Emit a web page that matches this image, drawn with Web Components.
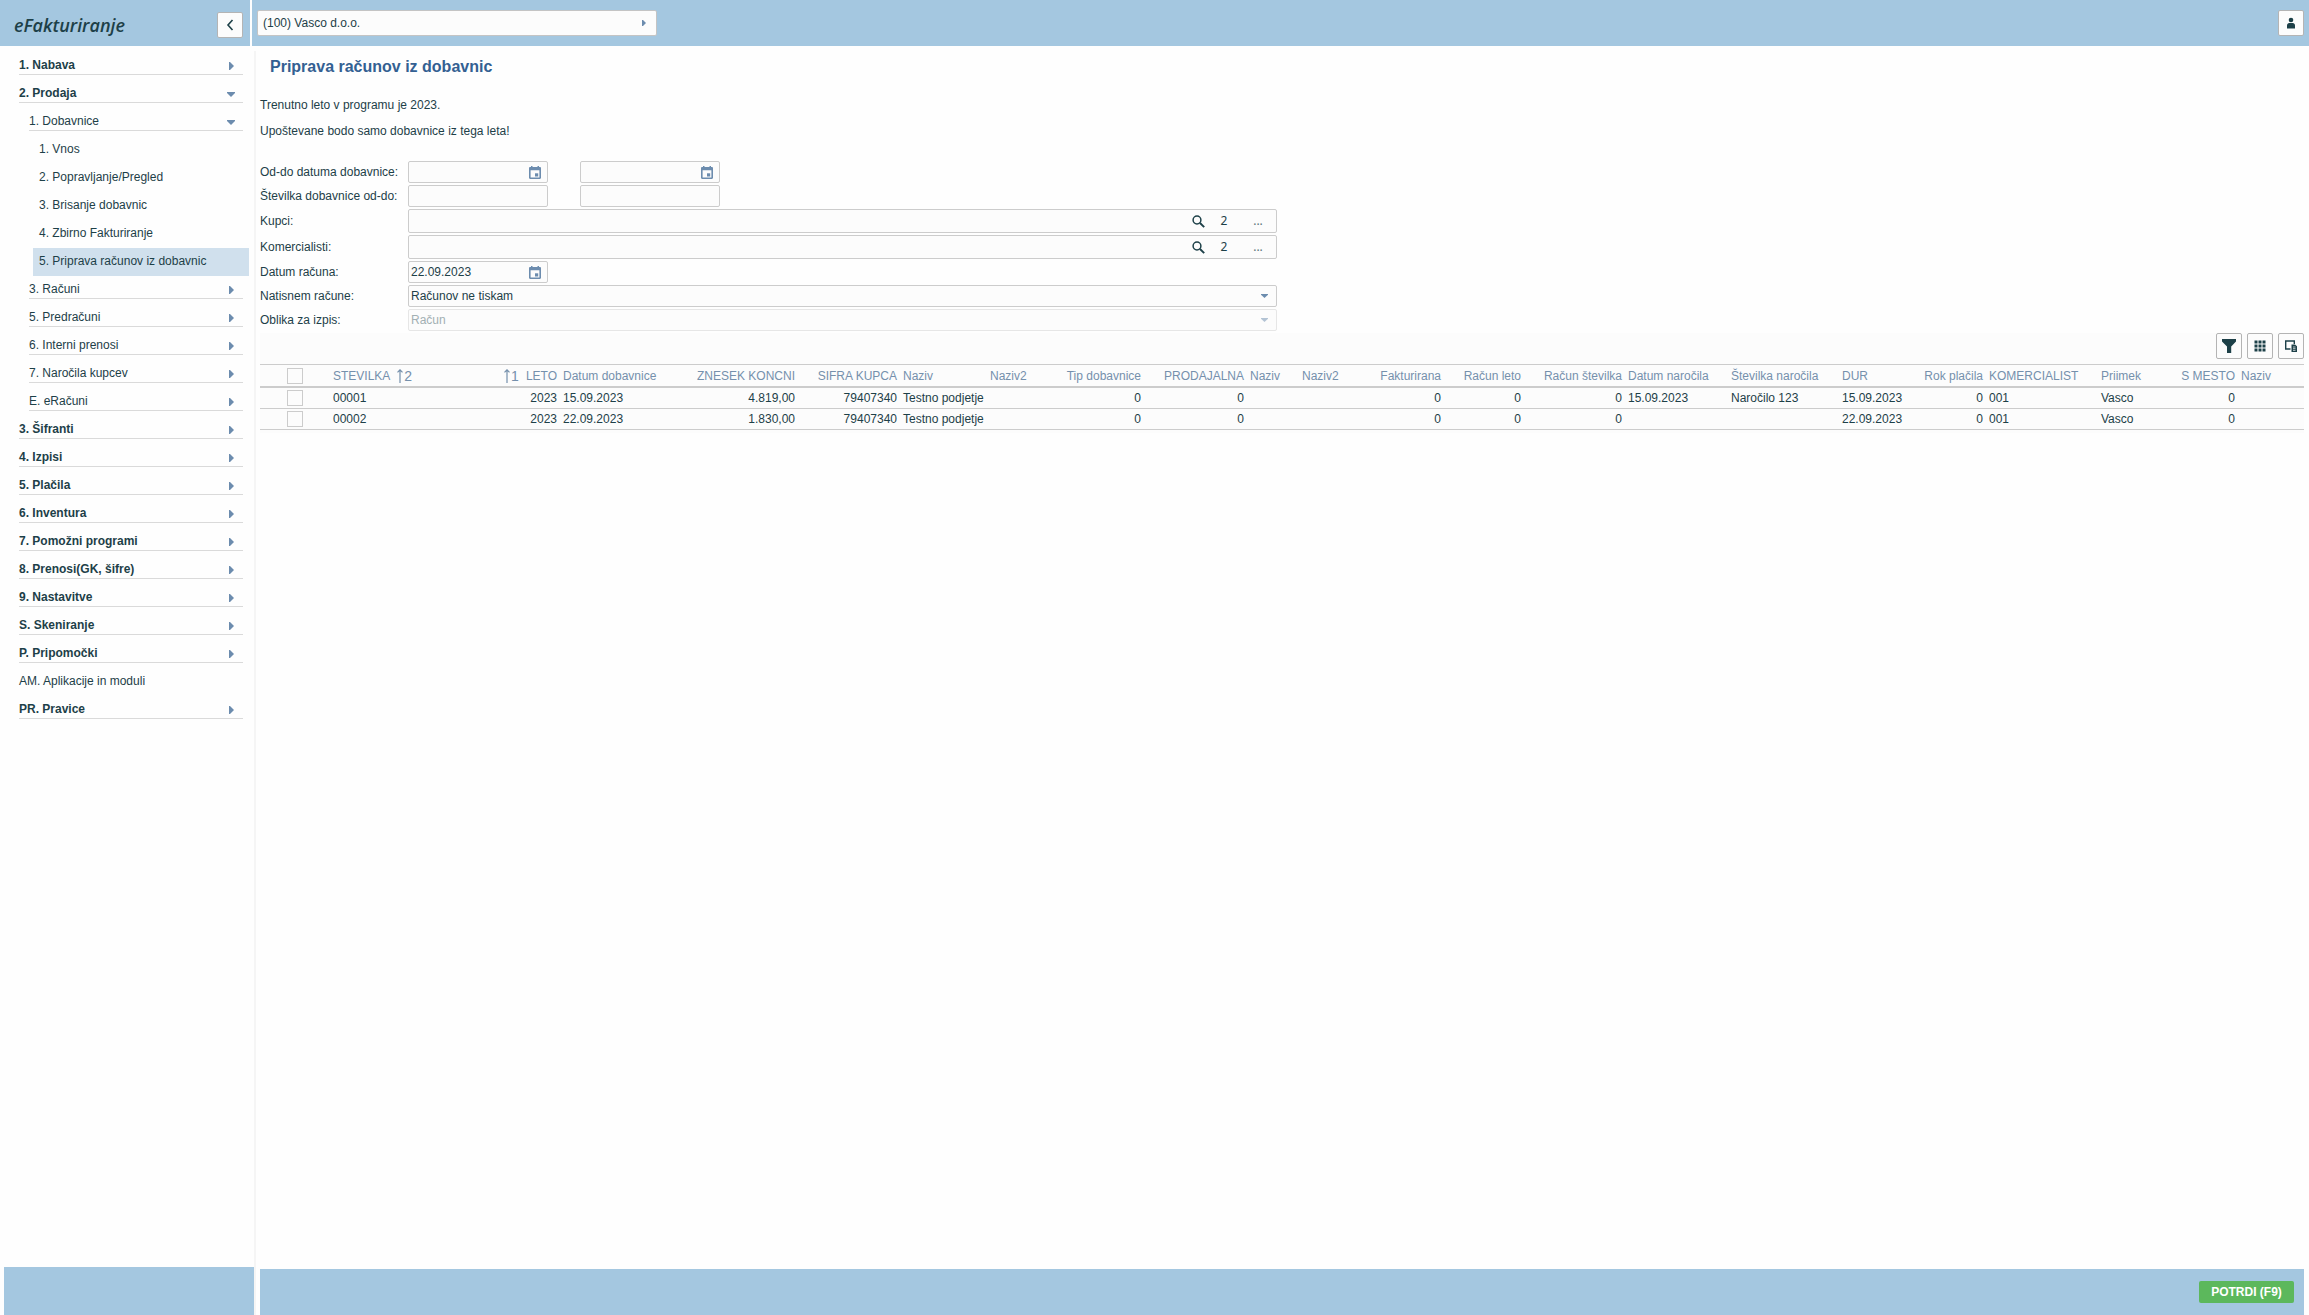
<!DOCTYPE html>
<html lang="sl">
<head>
<meta charset="utf-8">
<title>eFakturiranje</title>
<style>
  html, body { margin: 0; height: 100%; }
  body {
    --bar: #a4c7e0;
    --ink: #1d4048;
    --accent: #6c8cae;
    --line: #cccccc;
    --field: #fcfcfc;
    font: 12px/18px "Liberation Sans", Arial, sans-serif;
    color: var(--ink);
    background: #fefefe;
  }
</style>
</head>
<body>
<app-shell>
  <app-brand slot="brand">eFakturiranje</app-brand>
  <company-picker slot="top">(100) Vasco d.o.o.</company-picker>
  <icon-button slot="top" label="Uporabnik" icon="user"></icon-button>

  <nav-item slot="nav" level="1" arrow="right">1. Nabava</nav-item>
  <nav-item slot="nav" level="1" arrow="down">2. Prodaja</nav-item>
  <nav-item slot="nav" level="2" arrow="down">1. Dobavnice</nav-item>
  <nav-item slot="nav" level="3">1. Vnos</nav-item>
  <nav-item slot="nav" level="3">2. Popravljanje/Pregled</nav-item>
  <nav-item slot="nav" level="3">3. Brisanje dobavnic</nav-item>
  <nav-item slot="nav" level="3">4. Zbirno Fakturiranje</nav-item>
  <nav-item slot="nav" level="3" active>5. Priprava računov iz dobavnic</nav-item>
  <nav-item slot="nav" level="2" arrow="right">3. Računi</nav-item>
  <nav-item slot="nav" level="2" arrow="right">5. Predračuni</nav-item>
  <nav-item slot="nav" level="2" arrow="right">6. Interni prenosi</nav-item>
  <nav-item slot="nav" level="2" arrow="right">7. Naročila kupcev</nav-item>
  <nav-item slot="nav" level="2" arrow="right">E. eRačuni</nav-item>
  <nav-item slot="nav" level="1" arrow="right">3. Šifranti</nav-item>
  <nav-item slot="nav" level="1" arrow="right">4. Izpisi</nav-item>
  <nav-item slot="nav" level="1" arrow="right">5. Plačila</nav-item>
  <nav-item slot="nav" level="1" arrow="right">6. Inventura</nav-item>
  <nav-item slot="nav" level="1" arrow="right">7. Pomožni programi</nav-item>
  <nav-item slot="nav" level="1" arrow="right">8. Prenosi(GK, šifre)</nav-item>
  <nav-item slot="nav" level="1" arrow="right">9. Nastavitve</nav-item>
  <nav-item slot="nav" level="1" arrow="right">S. Skeniranje</nav-item>
  <nav-item slot="nav" level="1" arrow="right">P. Pripomočki</nav-item>
  <nav-item slot="nav" level="1">AM. Aplikacije in moduli</nav-item>
  <nav-item slot="nav" level="1" arrow="right">PR. Pravice</nav-item>

  <page-intro heading="Priprava računov iz dobavnic">
    <p>Trenutno leto v programu je 2023.</p>
    <p>Upoštevane bodo samo dobavnice iz tega leta!</p>
  </page-intro>
  <invoice-form>
    <form-row kind="date" pair label="Od-do datuma dobavnice:"></form-row>
    <form-row kind="text" pair label="Številka dobavnice od-do:"></form-row>
    <form-row kind="lookup" label="Kupci:"></form-row>
    <form-row kind="lookup" label="Komercialisti:"></form-row>
    <form-row kind="date" label="Datum računa:" value="22.09.2023"></form-row>
    <form-row kind="select" label="Natisnem račune:" value="Računov ne tiskam"></form-row>
    <form-row kind="select" label="Oblika za izpis:" value="Račun" disabled></form-row>
  </invoice-form>
  <data-grid>
    <icon-button slot="tools" label="Filter" icon="filter"></icon-button>
    <icon-button slot="tools" label="Stolpci" icon="grid"></icon-button>
    <icon-button slot="tools" label="Izvoz" icon="export"></icon-button>
  </data-grid>
  <confirm-button slot="actions">POTRDI (F9)</confirm-button>
</app-shell>

<script>
const ICONS = {
  back: '<svg width="12" height="14" viewBox="0 0 12 14"><path d="M8.5 2 4 7l4.500 5" fill="none" stroke="currentColor" stroke-width="1.6"/></svg>',
  user: '<svg width="10" height="12" viewBox="0 0 10 12" fill="currentColor"><circle cx="5" cy="3" r="2.3"/><path d="M1 11.500V8.400C1 7 2 6 3.300 6h3.400C8 6 9 7 9 8.400v3.100z"/></svg>',
  filter: '<svg width="16" height="16" viewBox="0 0 16 16" fill="currentColor"><path d="M1 1h14v2.6L10.2 8.6V15H6V8.6L1 3.6z"/></svg>',
  grid: '<svg width="12" height="12" viewBox="0 0 12 12" fill="currentColor"><path d="M.5.5h3v3h-3zM4.5.5h3v3h-3zM8.5.5h3v3h-3zM.5 4.5h3v3h-3zM4.5 4.5h3v3h-3zM8.5 4.5h3v3h-3zM.5 8.5h3v3h-3zM4.500 8.500h3v3h-3zM8.500 8.500h3v3h-3z"/></svg>',
  export: '<svg width="14" height="14" viewBox="0 0 14 14"><path d="M6.500 10H1.700V2h8.600v3" fill="none" stroke="currentColor" stroke-width="1.400"/><path d="M7.500 5.500H11l2 1.700V13H7.500z" fill="currentColor"/><path d="M9 8h2.500M9 9.700h2.500M9 11.400h2.500" stroke="#fcfcfc" stroke-width=".7"/></svg>',
  calendar: '<svg width="12" height="13" viewBox="0 0 12 13" fill="currentColor"><path fill-rule="evenodd" d="M2 0h1.500v1h5V0H10v1h.8c.7 0 1.200.5 1.200 1.200v9.600c0 .7-.5 1.200-1.200 1.200H1.200C.5 13 0 12.500 0 11.800V2.200C0 1.500.5 1 1.200 1H2zM1.600 4.300v7.100h8.800V4.300z"/><path d="M6 7.300h3.200v3.200H6z"/></svg>',
  search: '<svg width="13" height="13" viewBox="0 0 13 13" fill="none" stroke="currentColor"><circle cx="5" cy="5" r="3.900" stroke-width="1.500"/><path d="m8 8 4.200 4.200" stroke-width="1.900"/></svg>',
  right: '<svg width="5" height="8" viewBox="0 0 5 8" fill="currentColor"><path d="M0 0h1l4 4-4 4H0z"/></svg>',
  small: '<svg width="4" height="6" viewBox="0 0 4 6" fill="currentColor"><path d="M0 0h1l3 3-3 3H0z"/></svg>',
  down: '<svg width="8" height="5" viewBox="0 0 8 5" fill="currentColor"><path d="M0 0h8v1L4 5 0 1z"/></svg>',
  drop: '<svg width="7" height="4" viewBox="0 0 7 4" fill="currentColor"><path d="M0 0h7v.7L3.500 4 0 .7z"/></svg>',
  sort: '<svg width="6" height="14" viewBox="0 0 6 14"><path d="M3 14V1M.5 3.300 3 .8l2.500 2.500" fill="none" stroke="currentColor" stroke-width="1.200"/></svg>'
};
const RESET = '*{box-sizing:border-box} button,input,select{font:inherit;color:inherit;margin:0;padding:0;border:0;background:none;outline:0} svg{display:block;flex:none}';

function define(name, css, html) {
  customElements.define(name, class extends HTMLElement {
    constructor() { super(); this.attachShadow({ mode: 'open' }); }
    connectedCallback() {
      this.shadowRoot.innerHTML = `<style>${RESET}${css}</style>` + (typeof html === 'function' ? html(this) : html);
    }
  });
}

define('app-shell', `
  :host{display:grid;grid-template-columns:250px minmax(0,1fr);grid-template-rows:46px minmax(0,1fr);column-gap:2px;row-gap:5px;height:100vh}
  .brand{background:var(--bar);display:flex}
  .top{background:var(--bar);display:flex;align-items:flex-start;justify-content:space-between;padding:10px 5px}
  .body{grid-column:1/3;display:grid;grid-template-columns:256px minmax(0,1fr);min-height:0}
  aside{display:flex;flex-direction:column;border-right:2px solid #f5f5f5;padding-left:4px}
  nav{flex:1;padding:1px 5px 0 15px}
  .foot{height:48px;background:var(--bar)}
  .content{display:flex;flex-direction:column;padding:0 5px 0 4px;min-width:0}
  main{flex:1;min-width:0}
  footer{height:46px;background:var(--bar);display:flex;justify-content:flex-end;align-items:center;padding:0 10px}`,
  `<div class="brand"><slot name="brand"></slot></div>
   <header class="top"><slot name="top"></slot></header>
   <div class="body">
     <aside><nav><slot name="nav"></slot></nav><div class="foot"></div></aside>
     <div class="content"><main><slot></slot></main><footer><slot name="actions"></slot></footer></div>
   </div>`);

define('app-brand', `
  :host{flex:1;display:flex;justify-content:space-between;align-items:center;padding:4px 7px 0 14px}
  .name{font:italic 600 18px/26px "Open Sans","Noto Sans",sans-serif}`,
  `<span class="name"><slot></slot></span><icon-button label="Skrij meni" icon="back"></icon-button>`);

define('icon-button', `
  :host{display:block}
  button{width:26px;height:26px;display:flex;align-items:center;justify-content:center;background:var(--field);border:1px solid #b4b4b4;border-radius:2px}`,
  el => `<button type="button" aria-label="${el.getAttribute('label')}">${ICONS[el.getAttribute('icon')]}</button>`);

define('company-picker', `
  :host{display:block}
  button{width:400px;height:26px;display:flex;align-items:center;justify-content:space-between;padding:0 10px 0 5px;background:var(--field);border:1px solid #c4c4c4;border-radius:2px}
  svg{color:var(--accent)}`,
  `<button type="button"><span><slot></slot></span>${ICONS.small}</button>`);

define('nav-item', `
  :host{display:block;height:28px;margin-right:6px}
  :host([level="2"]){margin-left:10px}
  :host([level="3"]){margin:0 0 0 14px;padding-left:6px}
  :host([active]){background:#d0e0ed}
  a{display:flex;align-items:center;justify-content:space-between;height:23px;padding:4px 8px 0 0;line-height:18px;color:inherit;text-decoration:none;border-bottom:1px solid transparent}
  :host([arrow]) a{border-color:#dadada}
  :host([level="1"][arrow]) a{font-weight:bold}
  .mark{color:var(--accent);width:8px;display:flex;justify-content:center;padding-top:2px}`,
  el => `<a href="#"><span><slot></slot></span>${el.hasAttribute('arrow') ? `<span class="mark">${ICONS[el.getAttribute('arrow')]}</span>` : ''}</a>`);

define('page-intro', `
  :host{display:block;padding-top:6px}
  h1{margin:0 0 19px 10px;font-size:16px;line-height:20px;color:#336092}
  ::slotted(p){margin:0 0 8px;line-height:18px}`,
  el => `<h1>${el.getAttribute('heading')}</h1><slot></slot>`);

define('invoice-form', `
  :host{display:block;padding-top:13px}
  form{display:grid;gap:2px;margin-bottom:2px}`, `<form><slot></slot></form>`);

const control = (el, id, name) => {
  const kind = el.getAttribute('kind'), value = el.getAttribute('value') || '';
  const aria = name ? ` aria-label="${name}"` : '';
  if (kind === 'select')
    return `<div class="box wide${el.hasAttribute('disabled') ? ' off' : ''}"><select id="${id}"${el.hasAttribute('disabled') ? ' disabled' : ''}><option>${value}</option></select><span class="drop">${ICONS.drop}</span></div>`;
  const input = `<input type="text" id="${id}" value="${value}"${aria}>`;
  if (kind === 'lookup')
    return `<div class="box wide tall">${input}<button type="button" class="find" aria-label="Išči">${ICONS.search}</button><button type="button" class="count">2</button><button type="button" class="more">...</button></div>`;
  return `<div class="box">${input}${kind === 'date' ? `<button type="button" class="cal" aria-label="Koledar">${ICONS.calendar}</button>` : ''}</div>`;
};
define('form-row', `
  :host{display:flex;align-items:center}
  label{width:148px}
  .box{display:flex;align-items:center;width:140px;height:22px;background:var(--field);border:1px solid var(--line);border-radius:2px}
  .box + .box{margin-left:32px}
  .wide{width:869px}
  .tall{height:24px}
  input{flex:1;min-width:0;height:100%;padding-left:2px}
  .cal{color:var(--accent);margin-right:6px}
  .find{margin-right:12px}
  .count,.more{width:14px;font:12px/18px "Noto Sans",sans-serif;text-align:center}
  .more{margin:0 11px 0 20px;color:#5d757b}
  select{appearance:none;flex:1;height:100%;padding-left:2px;opacity:1}
  .drop{color:var(--accent);margin-right:8px}
  .off{border-color:#e6e6e6}
  .off select{color:#a2b0b3}
  .off .drop{opacity:.5}`,
  el => `<label for="f">${el.getAttribute('label')}</label>${control(el, 'f')}${el.hasAttribute('pair') ? control(el, 'g', el.getAttribute('label') + ' do') : ''}`);

define('confirm-button', `
  :host{display:block}
  button{height:22px;width:95px;background:#5cb85c;color:#fff;font-weight:bold;border-radius:2px}`,
  `<button type="button"><slot></slot></button>`);

/* title, column width, right aligned, values of the two rows */
const COLUMNS = [
  ['STEVILKA', 120, 0, '00001', '00002'], ['LETO', 110, 1, '2023', '2023'],
  ['Datum dobavnice', 115, 0, '15.09.2023', '22.09.2023'], ['ZNESEK KONCNI', 123, 1, '4.819,00', '1.830,00'],
  ['SIFRA KUPCA', 102, 1, '79407340', '79407340'], ['Naziv', 87, 0, 'Testno podjetje', 'Testno podjetje'],
  ['Naziv2', 75, 0, '', ''], ['Tip dobavnice', 82, 1, '0', '0'], ['PRODAJALNA', 103, 1, '0', '0'],
  ['Naziv', 52, 0, '', ''], ['Naziv2', 70, 0, '', ''], ['Fakturirana', 75, 1, '0', '0'],
  ['Račun leto', 80, 1, '0', '0'], ['Račun številka', 101, 1, '0', '0'],
  ['Datum naročila', 103, 0, '15.09.2023', ''], ['Številka naročila', 111, 0, 'Naročilo 123', ''],
  ['DUR', 75, 0, '15.09.2023', '22.09.2023'], ['Rok plačila', 72, 1, '0', '0'],
  ['KOMERCIALIST', 112, 0, '001', '001'], ['Priimek', 60, 0, 'Vasco', 'Vasco'],
  ['S MESTO', 80, 1, '0', '0'], ['Naziv', 0, 0, '', '']
];
const title = c => c[0] === 'STEVILKA' ? `<span class="sort">${c[0]}<i>${ICONS.sort}2</i></span>`
  : c[0] === 'LETO' ? `<span class="sort"><i>${ICONS.sort}1</i>${c[0]}</span>` : c[0];
const tick = name => `<input type="checkbox" aria-label="${name}">`;
define('data-grid', `
  :host{display:block;background:var(--field);padding-bottom:3px}
  .tools{display:flex;justify-content:flex-end;gap:5px;height:31px}
  table{width:100%;table-layout:fixed;border-collapse:separate;border-spacing:0}
  th,td{padding:0 3px;height:21px;line-height:18px;text-align:left;white-space:nowrap;border-bottom:1px solid var(--line)}
  th{height:24px;font-weight:normal;color:#7590ac;border-top:1px solid var(--line);border-bottom-width:2px}
  .num{text-align:right}
  .pick{text-align:center}
  .sort{display:inline-flex;align-items:center;gap:7px;vertical-align:middle}
  i{display:flex;align-items:center;gap:1px;font-style:normal;font-size:14px}
  input{appearance:none;display:block;width:16px;height:16px;margin:0 auto;border:1px solid var(--line);background:var(--field)}`,
  () => `<div class="tools"><slot name="tools"></slot></div><table>
    <colgroup><col style="width:70px">${COLUMNS.map(c => c[1] ? `<col style="width:${c[1]}px">` : '<col>').join('')}</colgroup>
    <thead><tr><th class="pick">${tick('Izberi vse')}</th>${COLUMNS.map(c => `<th class="${c[2] ? 'num' : ''}">${title(c)}</th>`).join('')}</tr></thead>
    <tbody>${[3, 4].map(r => `<tr><td class="pick">${tick('Izberi ' + COLUMNS[0][r])}</td>${COLUMNS.map(c => `<td class="${c[2] ? 'num' : ''}">${c[r]}</td>`).join('')}</tr>`).join('')}</tbody></table>`);
</script>
</body>
</html>
